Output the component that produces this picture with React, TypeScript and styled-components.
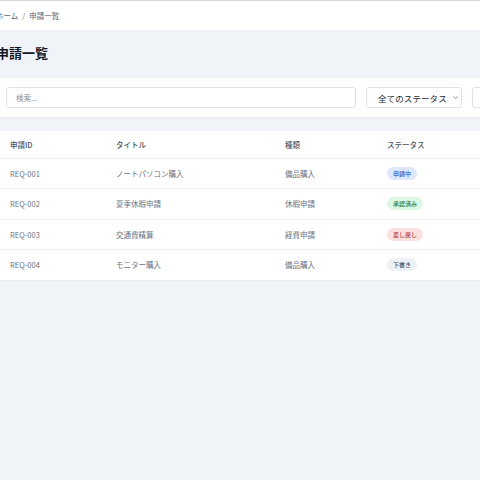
import React from 'react';
import styled, { createGlobalStyle } from 'styled-components';

const GlobalStyle = createGlobalStyle`
  html, body {
    margin: 0;
    padding: 0;
    background: #f0f4f9;
    overflow: hidden;
  }
  body {
    font-family: "Noto Sans CJK JP", "Noto Sans", "Liberation Sans", sans-serif;
  }
`;

type Status = 'pending' | 'approved' | 'returned' | 'draft';

const rows: { id: string; title: string; kind: string; status: Status; label: string }[] = [
  { id: 'REQ-001', title: 'ノートパソコン購入', kind: '備品購入', status: 'pending', label: '申請中' },
  { id: 'REQ-002', title: '夏季休暇申請', kind: '休暇申請', status: 'approved', label: '承認済み' },
  { id: 'REQ-003', title: '交通費精算', kind: '経費申請', status: 'returned', label: '差し戻し' },
  { id: 'REQ-004', title: 'モニター購入', kind: '備品購入', status: 'draft', label: '下書き' },
];

const badgeColors: Record<Status, { bg: string; fg: string }> = {
  pending: { bg: '#dde7fc', fg: '#3452b4' },
  approved: { bg: '#dcf7e4', fg: '#2f7d46' },
  returned: { bg: '#fbe0e0', fg: '#b63b3b' },
  draft: { bg: '#eef1f6', fg: '#4b5563' },
};

const App: React.FC = () => {
  return (
    <>
      <GlobalStyle />
      <Page>
        <Header>
          <Crumbs>
            <span>ホーム</span>
            <Sep>/</Sep>
            <span>申請一覧</span>
          </Crumbs>
        </Header>
        <Main>
          <Title>申請一覧</Title>
          <FilterCard>
            <SearchInput placeholder="検索..." />
            <Select>
              <span>全てのステータス</span>
              <Chevron viewBox="0 0 10 10">
                <path d="M3 4.2 L5 6.2 L7 4.2" fill="none" stroke="#6b7280" strokeWidth="0.9" strokeLinecap="round" strokeLinejoin="round" />
              </Chevron>
            </Select>
            <Select />
          </FilterCard>
          <TableCard>
            <Table>
              <colgroup>
                <col style={{ width: 106 }} />
                <col style={{ width: 169 }} />
                <col style={{ width: 102 }} />
                <col />
              </colgroup>
              <thead>
                <tr>
                  <Th>申請ID</Th>
                  <Th>タイトル</Th>
                  <Th>種類</Th>
                  <Th>ステータス</Th>
                </tr>
              </thead>
              <tbody>
                {rows.map((r) => (
                  <tr key={r.id}>
                    <Td>{r.id}</Td>
                    <Td>{r.title}</Td>
                    <Td>{r.kind}</Td>
                    <Td>
                      <Badge $status={r.status}>{r.label}</Badge>
                    </Td>
                  </tr>
                ))}
              </tbody>
            </Table>
          </TableCard>
        </Main>
      </Page>
    </>
  );
};

const Page = styled.div`
  width: 560px;
  margin-left: -4px;
  min-height: 480px;
`;

const Header = styled.header`
  height: 30px;
  box-sizing: border-box;
  background: #fff;
  border-top: 1px solid #d4d6da;
  margin-left: -20px;
  padding-left: 20px;
  display: flex;
  align-items: center;
`;

const Crumbs = styled.nav`
  display: flex;
  align-items: center;
  gap: 4px;
  font-size: 7.5px;
  color: #5b6575;
`;

const Sep = styled.span`
  color: #7b8494;
`;

const Main = styled.main`
  padding-top: 15px;
`;

const Title = styled.h1`
  margin: 0 0 17px;
  font-size: 13px;
  line-height: 16px;
  font-weight: 700;
  color: #111827;
`;

const FilterCard = styled.section`
  height: 39px;
  box-sizing: border-box;
  background: #fff;
  border-radius: 4px;
  box-shadow: 0 1px 2px rgba(16, 24, 40, 0.05);
  padding: 9px 10px;
  display: flex;
  gap: 10px;
  margin-bottom: 14px;
`;

const SearchInput = styled.input`
  width: 350px;
  height: 21px;
  flex-shrink: 0;
  box-sizing: border-box;
  border: 1px solid #dfe3e8;
  border-radius: 3px;
  padding: 0 9px;
  font-family: inherit;
  font-size: 7.5px;
  color: #374151;
  outline: none;
  &::placeholder {
    color: #8a919c;
  }
`;

const Select = styled.div`
  width: 96px;
  height: 21px;
  box-sizing: border-box;
  border: 1px solid #dfe3e8;
  border-radius: 3px;
  padding: 0 1px 0 11px;
  display: flex;
  align-items: center;
  justify-content: space-between;
  font-size: 8.5px;
  letter-spacing: 0.1px;
  color: #1f2937;
  flex-shrink: 0;
`;

const Chevron = styled.svg`
  width: 9px;
  height: 9px;
`;

const TableCard = styled.section`
  background: #fff;
  border-radius: 4px;
  box-shadow: 0 1px 2px rgba(16, 24, 40, 0.05);
  overflow: hidden;
`;

const Table = styled.table`
  width: 100%;
  table-layout: fixed;
  border-collapse: collapse;
`;

const Th = styled.th`
  height: 27px;
  padding: 0 0 0 14px;
  text-align: left;
  font-size: 7.5px;
  font-weight: 500;
  color: #4b5563;
  border-bottom: 1px solid #eceff3;
`;

const Td = styled.td`
  height: 29.3px;
  padding: 0 0 0 14px;
  font-size: 7.5px;
  color: #6b7280;
  border-bottom: 1px solid #eceff3;
  tr:last-child > & {
    border-bottom: none;
    height: 30px;
  }
`;

const Badge = styled.span<{ $status: Status }>`
  display: inline-flex;
  align-items: center;
  height: 13px;
  padding: 0 6px;
  border-radius: 7px;
  font-size: 6px;
  font-weight: 500;
  background: ${(p) => badgeColors[p.$status].bg};
  color: ${(p) => badgeColors[p.$status].fg};
`;

export default App;
